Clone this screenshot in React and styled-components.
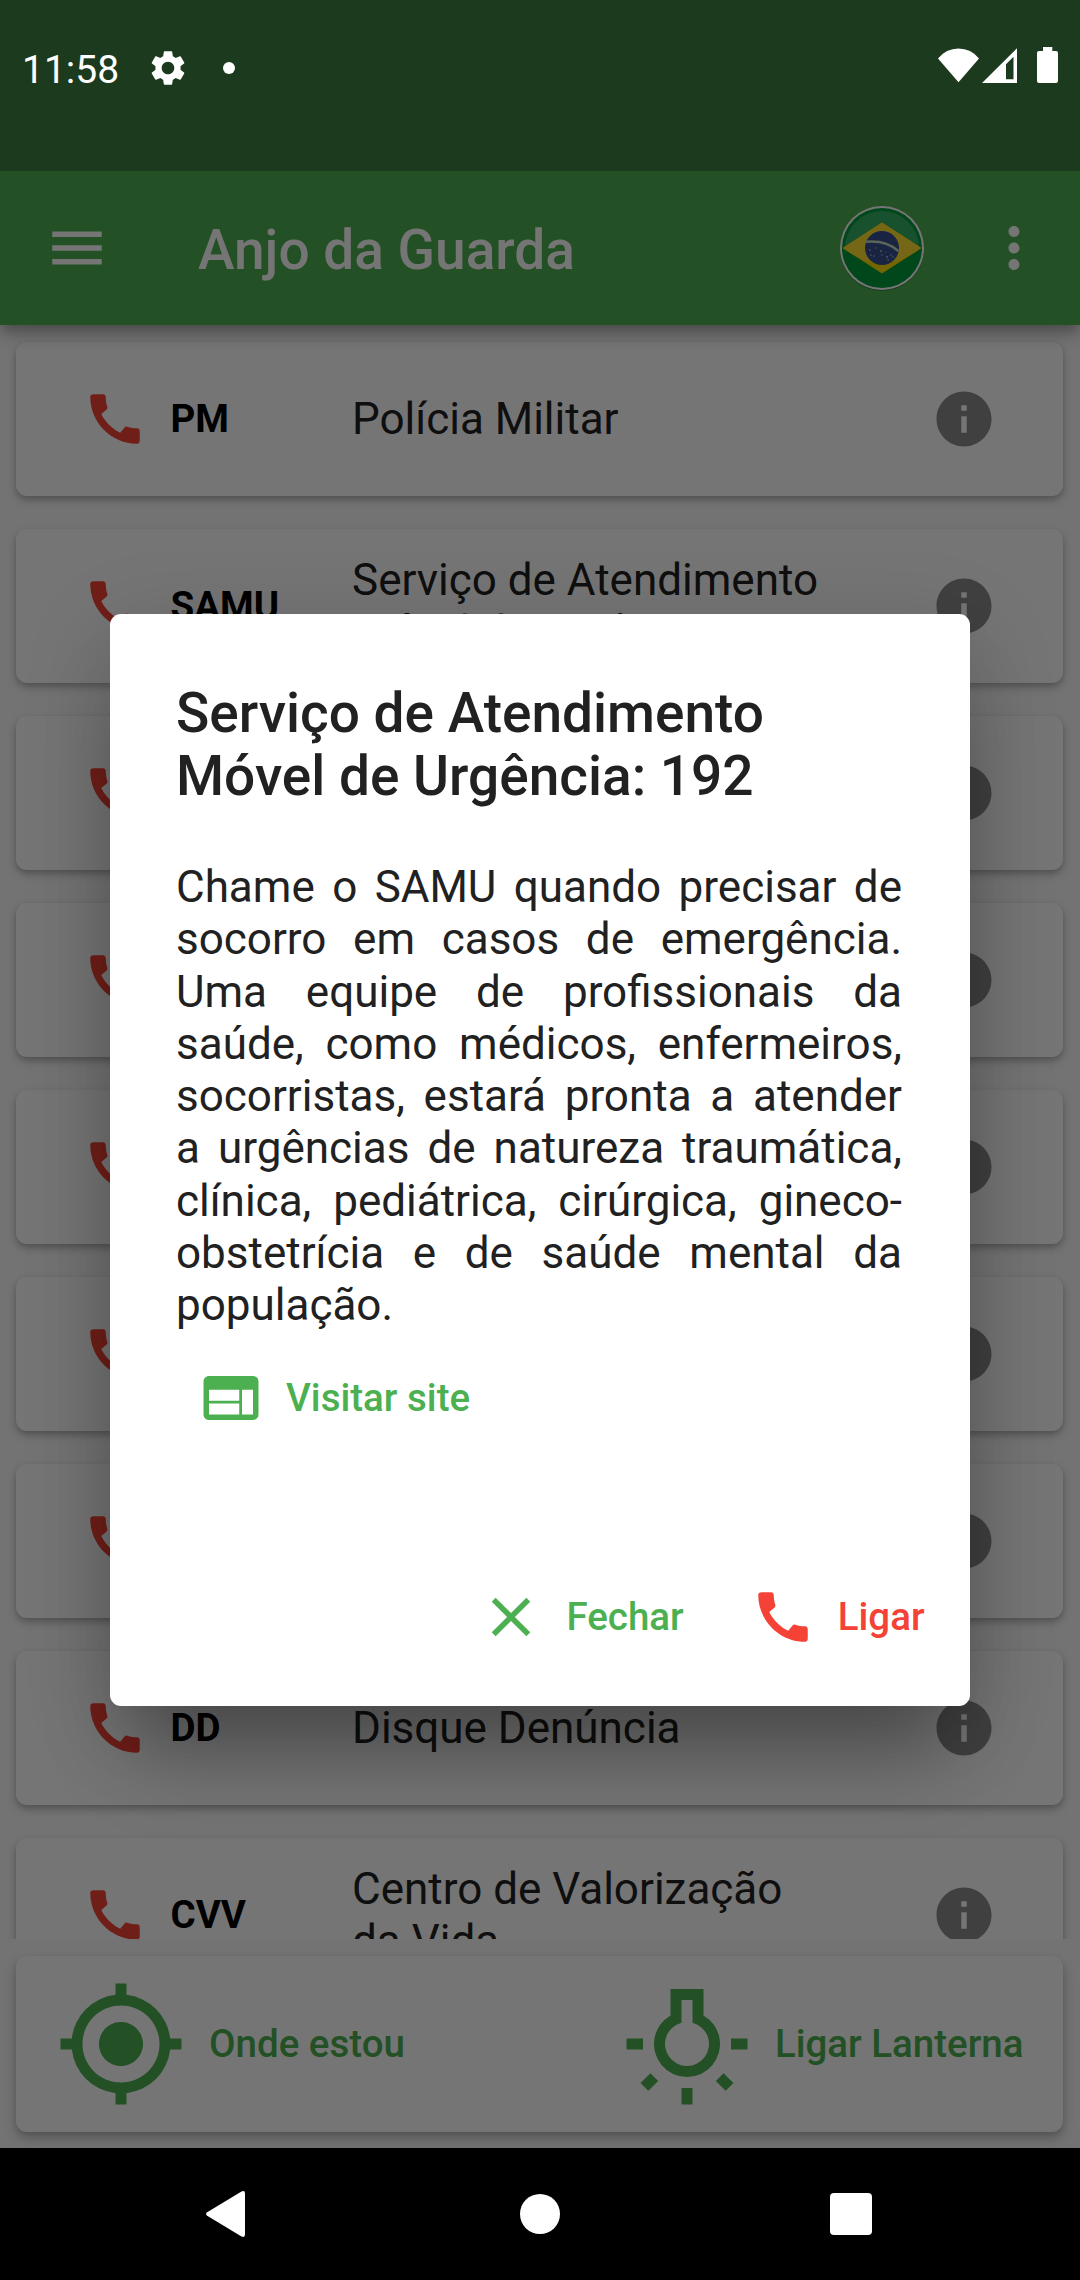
import React from "react";
import styled, { createGlobalStyle } from "styled-components";
import {
  MdCall,
  MdClose,
  MdInfo,
  MdMenu,
  MdMoreVert,
  MdMyLocation,
  MdSettings,
  MdWeb,
} from "react-icons/md";

const GREEN = "#4caf50";
const RED = "#f44336";

const GlobalStyle = createGlobalStyle`
  * { box-sizing: border-box; }
  html, body { margin: 0; padding: 0; background: #000; }
  body { font-family: Roboto, "Noto Sans", sans-serif; }
  svg { display: block; flex: none; }
`;

const Screen = styled.div`
  position: relative;
  display: flex;
  flex-direction: column;
  width: 1080px;
  height: 2280px;
  overflow: hidden;
  background: #fafafa;
`;

/* ---------- status bar ---------- */

const StatusBar = styled.header`
  position: relative;
  z-index: 3;
  flex: none;
  height: 171px;
  padding: 46px 22px 0 22px;
  display: flex;
  align-items: flex-start;
  justify-content: space-between;
  background: #1c3a1d;
  color: #fff;
`;

const StatusGroup = styled.div`
  display: flex;
  align-items: center;
  height: 43px;
`;

const Clock = styled.span`
  width: 125px;
  font-size: 39px;
  line-height: 45px;
  padding-top: 6px;
`;

const Dot = styled.span`
  width: 12px;
  height: 12px;
  margin-left: 34px;
  border-radius: 50%;
  background: #fff;
`;

/* ---------- app bar ---------- */

const AppBar = styled.div`
  position: relative;
  z-index: 1;
  flex: none;
  display: flex;
  align-items: center;
  height: 154px;
  padding: 0 33px 0 44px;
  background: ${GREEN};
  color: #fff;
  box-shadow: 0 6px 11px -3px rgba(0, 0, 0, 0.2), 0 11px 14px rgba(0, 0, 0, 0.14),
    0 3px 28px rgba(0, 0, 0, 0.12);
`;

const AppTitle = styled.h1`
  flex: 1;
  margin: 0 0 0 88px;
  font-size: 55px;
  font-weight: 500;
  line-height: 64px;
  padding-top: 4px;
`;

const FlagButton = styled.div`
  margin-right: 56px;
`;

/* ---------- list ---------- */

const List = styled.main`
  flex: none;
  height: 1614px;
  overflow: hidden;
`;

const Card = styled.section`
  display: flex;
  align-items: center;
  height: ${(p) => p.$height}px;
  margin: 16.5px 17px 16.5px 16px;
  padding: 0 ${(p) => p.$pad}px;
  border-radius: 11px;
  background: #fff;
  box-shadow: 0 ${(p) => p.$lift}px ${(p) => p.$lift * 2}px rgba(0, 0, 0, 0.25),
    0 2px 5px rgba(0, 0, 0, 0.07);
`;

const ListCard = styled(Card)`
  margin: 0 17px 33px 16px;
  &:first-child {
    margin-top: 16.5px;
  }
`;

const Code = styled.strong`
  width: 181.5px;
  margin-left: 22.5px;
  font-size: 38.5px;
  font-weight: 700;
  line-height: 46px;
  color: #000;
`;

const Name = styled.span`
  width: 484px;
  margin-right: auto;
  font-size: 44px;
  line-height: 52px;
  color: #212121;
`;

const InfoSlot = styled.span`
  color: #8b8b8b;
`;

const CallSlot = styled.span`
  color: ${RED};
`;

/* ---------- buttons ---------- */

const TextButton = styled.button`
  display: flex;
  align-items: center;
  gap: 22px;
  padding: 0 22px;
  border: 0;
  background: none;
  font: 500 38.5px/46px Roboto, "Noto Sans", sans-serif;
  color: ${(p) => p.$color};
`;

const BottomArea = styled.footer`
  flex: none;
  height: 209px;
  overflow: hidden;
  display: flex;
  flex-direction: column;
`;

const BottomCard = styled(Card)`
  justify-content: space-between;
  padding: 0 17.5px 0 17px;
`;

const NavBar = styled.nav`
  position: relative;
  z-index: 3;
  flex: none;
  display: flex;
  align-items: center;
  justify-content: space-between;
  height: 132px;
  padding: 0 208px 0 206px;
  background: #000;
`;

/* ---------- dialog ---------- */

const Scrim = styled.div`
  position: absolute;
  inset: 0;
  z-index: 2;
  display: flex;
  justify-content: center;
  align-items: flex-start;
  padding-top: 613.5px;
  background: rgba(0, 0, 0, 0.54);
`;

const Dialog = styled.div`
  display: flex;
  flex-direction: column;
  width: 860px;
  height: 1092px;
  padding: 68px 0 44px;
  border-radius: 11px;
  background: #fff;
  color: #212121;
  box-shadow: 0 66px 80px -22px rgba(0, 0, 0, 0.3), 0 20px 90px rgba(0, 0, 0, 0.16);
`;

const DialogTitle = styled.h2`
  margin: 0;
  padding: 0 66px;
  font-size: 55px;
  font-weight: 500;
  line-height: 63.5px;
`;

const DialogText = styled.p`
  margin: 52.5px 68px 0 66px;
  font-size: 44px;
  line-height: 52.25px;
  text-align: justify;
`;

const DialogLink = styled.div`
  display: flex;
  margin: 34px 66px 0;
`;

const DialogActions = styled.div`
  display: flex;
  justify-content: flex-end;
  gap: 22px;
  margin-top: auto;
  padding: 0 23.5px 11.5px 0;
`;

const contacts = [
  { code: "PM", name: "Polícia Militar" },
  { code: "SAMU", name: "Serviço de Atendimento Móvel de Urgência" },
  { code: "", name: "" },
  { code: "", name: "" },
  { code: "", name: "" },
  { code: "", name: "" },
  { code: "", name: "" },
  { code: "DD", name: "Disque Denúncia" },
  { code: "CVV", name: "Centro de Valorização da Vida" },
];

function StatusIcons() {
  return (
    <svg width="121" height="38" viewBox="937 48 121 38" fill="#fff">
      <path d="M938 60.5Q946 50.5 958.500 50.500T979 60.500L958.500 84.300Z" />
      <path
        fillRule="evenodd"
        d="M982 85L1017 50.200V85ZM1006 66.200V81.300H1013.500V58.800Z"
      />
      <path d="M1043 49h9.300v4h3.700a2 2 0 0 1 2 2v28a2 2 0 0 1-2 2h-17a2 2 0 0 1-2-2V55a2 2 0 0 1 2-2h4z" />
    </svg>
  );
}

function BrazilFlag() {
  return (
    <svg width="86" height="86" viewBox="-43 -43 86 86">
      <circle cy="1" r="42" fill="#000" opacity=".25" />
      <circle r="42" fill="#fff" />
      <circle r="40" fill="#009c3b" />
      <path d="M-37 0A37 37 0 0 1 37 0Q20 14 0 14T-37 0Z" fill="#33b062" />
      <path d="M-39.500 0L0 -25.500L39.500 0L0 25.500Z" fill="#ffdd00" />
      <path d="M-37 -1.500L0 -25.500L37 -1.500L39 0Q20 15 0 15T-39 0Z" fill="#ffe02e" />
      <circle r="17" fill="#35508f" />
      <path d="M-15.800 -6.200Q4 -8 16.500 3.200" fill="none" stroke="#c9dcc4" strokeWidth="2.400" />
      <g fill="#b9c4e0">
        <circle cx="-12" cy="2" r=".8" />
        <circle cx="-8" cy="8" r=".8" />
        <circle cx="-6" cy="0" r=".7" />
        <circle cx="-1" cy="3" r=".9" />
        <circle cx="0" cy="7" r=".7" />
        <circle cx="-11" cy="7" r=".7" />
        <circle cx="5" cy="9" r=".9" />
        <circle cx="9" cy="7" r=".8" />
        <circle cx="6" cy="12" r=".8" />
        <circle cx="11" cy="9" r=".7" />
        <circle cx="4" cy="4" r=".6" />
      </g>
    </svg>
  );
}

function LanternIcon() {
  return (
    <svg width="132" height="132" viewBox="0 0 24 24" fill="currentColor">
      <path
        fillRule="evenodd"
        d="M9 2h6v4.810A6 6 0 1 1 9 6.810zM11 4v4.130A4 4 0 1 0 13 8.130V4z"
      />
      <path d="M1 11h3v2H1zM20 11h3v2h-3zM11 20h2v3h-2z" />
      <path d="M3.550 19.090l1.410 1.410 1.800-1.790-1.420-1.410zM17.240 18.710l1.790 1.800 1.410-1.410-1.800-1.790z" />
    </svg>
  );
}

export default function App() {
  return (
    <Screen>
      <GlobalStyle />
      <StatusBar>
        <StatusGroup>
          <Clock>11:58</Clock>
          <MdSettings size={42} />
          <Dot />
        </StatusGroup>
        <StatusIcons />
      </StatusBar>

      <AppBar>
        <MdMenu size={66} />
        <AppTitle>Anjo da Guarda</AppTitle>
        <FlagButton>
          <BrazilFlag />
        </FlagButton>
        <MdMoreVert size={66} />
      </AppBar>

      <List>
        {contacts.map((c, i) => (
          <ListCard key={i} $height={154} $pad={66} $lift={4}>
            <CallSlot>
              <MdCall size={66} />
            </CallSlot>
            <Code>{c.code}</Code>
            <Name>{c.name}</Name>
            <InfoSlot>
              <MdInfo size={66} />
            </InfoSlot>
          </ListCard>
        ))}
      </List>

      <BottomArea>
        <BottomCard $height={176} $pad={16.5} $lift={6}>
          <TextButton $color={GREEN}>
            <MdMyLocation size={132} />
            Onde estou
          </TextButton>
          <TextButton $color={GREEN}>
            <LanternIcon />
            Ligar Lanterna
          </TextButton>
        </BottomCard>
      </BottomArea>

      <NavBar>
        <svg width="42" height="48" viewBox="0 0 42 48" fill="#fff">
          <path d="M1.200 22.200L35.500 1.500Q39 0 39 3.500V44.500Q39 48 35.500 46.500L1.200 25.800Q-1 24 1.200 22.200Z" />
        </svg>
        <svg width="42" height="42" viewBox="-1 0 42 42" fill="#fff">
          <circle cx="21" cy="21" r="20" />
        </svg>
        <svg width="42" height="42" viewBox="0 0 42 42" fill="#fff">
          <rect width="42" height="42" rx="4" />
        </svg>
      </NavBar>

      <Scrim>
        <Dialog>
          <DialogTitle>Serviço de Atendimento Móvel de Urgência: 192</DialogTitle>
          <DialogText>
            Chame o SAMU quando precisar de socorro em casos de emergência. Uma
            equipe de profissionais da saúde, como médicos, enfermeiros,
            socorristas, estará pronta a atender a urgências de natureza
            traumática, clínica, pediátrica, cirúrgica, gineco-obstetrícia e de
            saúde mental da população.
          </DialogText>
          <DialogLink>
            <TextButton $color={GREEN}>
              <MdWeb size={66} />
              Visitar site
            </TextButton>
          </DialogLink>
          <DialogActions>
            <TextButton $color={GREEN}>
              <MdClose size={66} />
              Fechar
            </TextButton>
            <TextButton $color={RED}>
              <MdCall size={66} />
              Ligar
            </TextButton>
          </DialogActions>
        </Dialog>
      </Scrim>
    </Screen>
  );
}
